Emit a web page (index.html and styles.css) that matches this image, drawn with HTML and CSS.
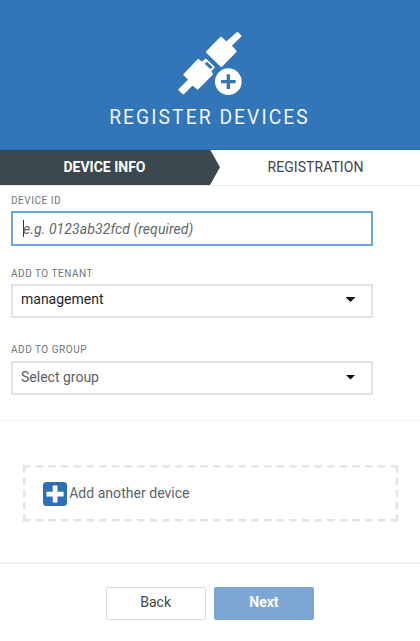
FILE: index.html
```html
<!DOCTYPE html>
<html lang="en">
<head>
<meta charset="utf-8">
<title>Register devices</title>
<link rel="stylesheet" href="styles.css">
</head>
<body>
<header class="header">
  <svg class="logo" viewBox="0 0 300 270" fill="#fff">
    <g stroke="#fff" stroke-width="6" stroke-linejoin="round">
      <path d="M232 39L241 48L212 77L227 94L184 138L141 96L183 53L199 68Z"/>
      <path d="M115 120L125 129L137 119L161 142L150 154L156 162L113 206L98 192L70 220L58 209L88 179L73 164Z"/>
    </g>
    <path d="M134 131l7-6 17 16-7 7z" fill="#3375b9"/>
    <circle cx="205" cy="185" r="40"/>
    <path d="M200 163h10v17h17v10h-17v17h-10v-17h-17v-10h17z" fill="#3375b9"/>
  </svg>
  <h1 class="title">REGISTER DEVICES</h1>
</header>
<nav class="steps">
  <div class="step step-active"><span>DEVICE INFO</span></div>
  <div class="step"><span class="step-next">REGISTRATION</span></div>
</nav>
<main class="form">
  <label class="label label-id">DEVICE ID</label>
  <div class="field field-focus"><i class="caret"></i><span class="placeholder">e.g. 0123ab32fcd (required)</span></div>
  <label class="label label-tenant">ADD TO TENANT</label>
  <div class="field select"><span class="value">management</span><i class="arrow"></i></div>
  <label class="label label-group">ADD TO GROUP</label>
  <div class="field select select-group"><span class="value value-empty">Select group</span><i class="arrow"></i></div>
</main>
<section class="more">
  <div class="add">
    <svg class="dashes" viewBox="0 0 375 57" fill="none" stroke="#e3e3e3" stroke-width="2.4">
      <path d="M0 1.4H375M0 55.3H375" stroke-dasharray="7.5 5.172"/>
      <path d="M1.2 .2V56.5M373.8 .2V56.5" stroke-dasharray="7.5 4.7"/>
    </svg>
    <svg class="plus" viewBox="0 0 24 24">
      <rect width="24" height="24" rx="3.5" fill="#2e70b8"/>
      <path d="M9.7 3.5h4.8v6.2h6.1v4.8h-6.1v6.1H9.7v-6.1H3.5V9.7h6.2z" fill="#fff"/>
    </svg>
    <span class="add-text">Add another device</span>
  </div>
</section>
<footer class="actions">
  <button class="btn"><span class="back">Back</span></button>
  <button class="btn btn-next"><span class="next">Next</span></button>
</footer>
</body>
</html>
```
FILE: styles.css
```css
* { box-sizing: border-box; }
body { margin: 0; width: 420px; height: 641px; overflow: hidden; background: #fff; font-family: Roboto, sans-serif; font-size: 14px; color: #49545b; }
.header { height: 149.5px; padding-top: 20px; background: #3375b9; border-bottom: 1px solid #1c6fc0; display: flex; flex-direction: column; align-items: center; }
.logo { width: 100px; height: 90px; flex: none; }
.title { margin: -4px 0 0 -1px; font-size: 19.3px; line-height: 24px; font-weight: 400; letter-spacing: 2.05px; color: #eef4fb; white-space: nowrap; }
.steps { display: flex; height: 36.5px; border-bottom: 1px solid #ebebeb; }
.step { flex: 1; display: flex; align-items: center; justify-content: center; color: #41464d; }
.step-active { flex: 0 0 220px; padding-right: 11px; background: #3b4850; color: #fff; font-weight: 700; letter-spacing: 0; clip-path: polygon(0 0, 210px 0, 220px 50%, 210px 100%, 0 100%); }
.step-next { margin-right: 9px; letter-spacing: .05px; }
.form { height: 235px; padding: 8px 0 0 11px; border-bottom: 1px solid #f4f4f4; }
.label { display: block; font-size: 10px; line-height: 13px; letter-spacing: .52px; color: #6c777d; }
.field { width: 362px; height: 34px; border: 2px solid #e3e3e3; display: flex; align-items: center; }
.field-focus { height: 35px; margin-top: 4px; border-color: #66a8e5; padding-left: 10px; }
.caret { width: 1px; height: 17px; background: #333; margin-right: -1px; }
.placeholder { font-style: italic; letter-spacing: .09px; color: #5c686f; }
.label-tenant { margin-top: 21px; }
.select { margin-top: 4px; padding: 0 15.5px 4px 8px; justify-content: space-between; }
.value { color: #22262a; }
.value-empty { color: #5c5f62; }
.label-group { margin-top: 25px; }
.select-group { margin-top: 5px; padding-bottom: 3px; }
.arrow { width: 10px; height: 5px; margin-top: 1px; background: #111; clip-path: polygon(0 0, 100% 0, 50% 100%); }
.more { height: 143px; padding: 44px 0 0 22.5px; border-bottom: 2px solid #f3f3f3; }
.add { position: relative; width: 375px; height: 57px; padding-left: 20.5px; display: flex; align-items: center; }
.dashes { position: absolute; left: 0; top: 0; width: 375px; height: 57px; }
.plus { width: 24px; height: 24px; flex: none; }
.add-text { margin: -2px 0 0 2.2px; letter-spacing: .03px; color: #59646b; }
.actions { display: flex; gap: 8px; padding: 23px 0 0 105.5px; }
.btn { width: 100.3px; height: 33px; padding: 0 0 3px; border: 1px solid #dcdcdc; border-radius: 2px; background: #fff; font: 400 14px Roboto, sans-serif; color: #41464a; }
.btn-next { border-color: #7ca6d4; background: #7ca6d4; color: #fff; font-weight: 700; }
```
